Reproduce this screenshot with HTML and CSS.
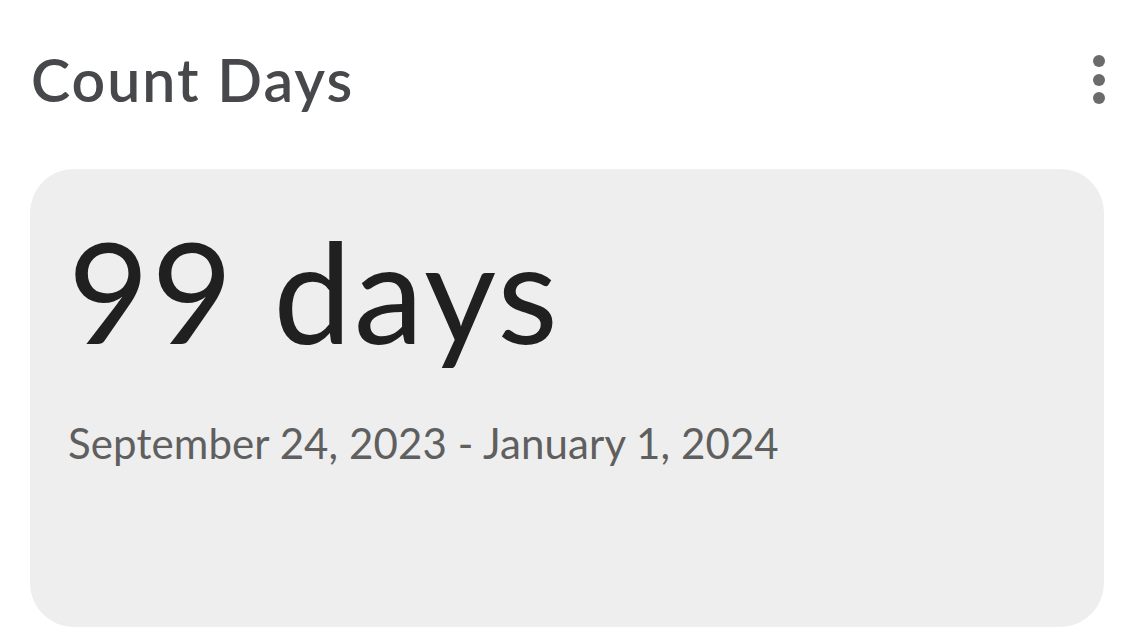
FILE: index.html
```html
<!DOCTYPE html>
<html>
<head>
<meta charset="utf-8">
<link rel="stylesheet" href="styles.css">
</head>
<body>
<div class="page">
  <header class="topbar">
    <h1 class="title">Count Days</h1>
    <div class="menu" aria-label="More options">
      <span class="dot"></span><span class="dot"></span><span class="dot"></span>
    </div>
  </header>
  <section class="card">
    <div class="count">99 days</div>
    <div class="range">September 24, 2023 - January 1, 2024</div>
  </section>
</div>
</body>
</html>
```
FILE: styles.css
```css
html, body {
  margin: 0;
  padding: 0;
  background: #ffffff;
}
.page {
  width: 1132px;
  height: 640px;
  box-sizing: border-box;
  padding: 0 28px 0 30px;
  font-family: "Lato", "Roboto", sans-serif;
  overflow: hidden;
}
.topbar {
  height: 169px;
  display: flex;
  justify-content: space-between;
  align-items: flex-start;
}
.title {
  margin: 40px 0 0 1px;
  font-size: 59px;
  font-weight: 600;
  line-height: 80px;
  color: #47484c;
  letter-spacing: 2px;
}
.menu {
  margin-top: 55px;
  margin-right: -1px;
  width: 12px;
  display: flex;
  flex-direction: column;
  gap: 6.5px;
}
.dot {
  width: 12px;
  height: 12px;
  border-radius: 50%;
  background: #6b6b6e;
}
.card {
  height: 458px;
  background: #eeeeee;
  border-radius: 44px;
  padding: 0 38px;
  box-sizing: border-box;
  display: flex;
  flex-direction: column;
}
.count {
  margin-top: 41px;
  font-size: 140px;
  line-height: 160px;
  color: #202020;
  letter-spacing: 2.3px;
}
.range {
  margin-top: 45px;
  font-size: 42px;
  line-height: 56px;
  color: #5f5f60;
  letter-spacing: 0.1px;
}
```
